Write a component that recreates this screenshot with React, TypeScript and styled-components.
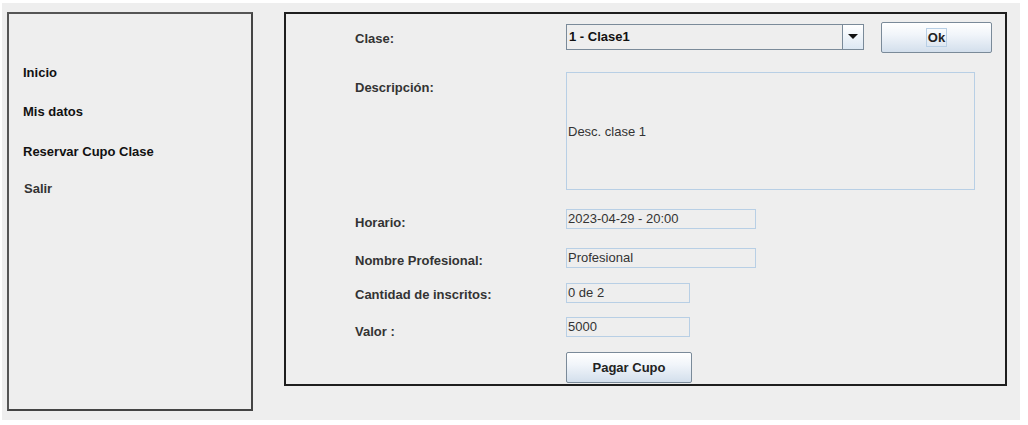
import React from "react";
import styled, { createGlobalStyle } from "styled-components";

const GlobalStyle = createGlobalStyle`
  html, body {
    margin: 0;
    padding: 0;
    background: #ffffff;
  }
  body {
    font-family: "Liberation Sans", Arial, sans-serif;
    font-size: 13px;
  }
`;

interface itemProps {
  indent?: number;
  gap?: number;
  muted?: boolean;
}
interface rowProps {
  top: number;
}
interface labelProps {
  pad: number;
}
interface fieldProps {
  w: number;
}

const Window = styled.div`
  display: flex;
  align-items: flex-start;
  gap: 31px;
  margin: 3px 0 0 2px;
  width: 1018px;
  height: 417px;
  padding: 9px 0 0 5px;
  box-sizing: border-box;
  background: #eeeeee;
`;

const SideMenu = styled.div`
  width: 246px;
  height: 399px;
  box-sizing: border-box;
  border: 2px solid #444444;
  border-top-color: #555555;
  border-left-color: #555555;
  padding: 51px 0 0 14px;
  display: flex;
  flex-direction: column;
`;

const MenuItem = styled.div<itemProps>`
  font-weight: bold;
  font-size: 13px;
  line-height: 15px;
  color: ${({ muted }) => (muted ? "#333333" : "#111111")};
  margin-left: ${({ indent }) => indent || 0}px;
  margin-top: ${({ gap }) => gap || 0}px;
  cursor: pointer;
`;

const MainPanel = styled.div`
  width: 723px;
  height: 374px;
  box-sizing: border-box;
  border: 2px solid #1e1e1e;
  padding: 8px 0 0 69px;
  display: flex;
  flex-direction: column;
`;

const Row = styled.div<rowProps>`
  display: flex;
  align-items: flex-start;
  margin-top: ${({ top }) => top}px;
`;

const Label = styled.div<labelProps>`
  width: 211px;
  flex-shrink: 0;
  padding-top: ${({ pad }) => pad}px;
  font-weight: bold;
  font-size: 13px;
  line-height: 15px;
  color: #333333;
`;

const Combo = styled.div`
  margin-top: 2px;
  width: 298px;
  height: 26px;
  box-sizing: border-box;
  border: 1px solid #7a8a99;
  background: #eeeeee;
  display: flex;
`;

const ComboValue = styled.div`
  flex: 1;
  padding-left: 2px;
  font-weight: bold;
  font-size: 13px;
  line-height: 24px;
  color: #111111;
`;

const ComboArrow = styled.div`
  width: 20px;
  border-left: 1px solid #7a8a99;
  background: linear-gradient(#ffffff, #dde8f3);
  display: flex;
  align-items: center;
  justify-content: center;
`;

const Button = styled.button<fieldProps>`
  width: ${({ w }) => w}px;
  height: 31px;
  box-sizing: border-box;
  border: 1px solid #7a8a99;
  border-radius: 2px;
  background: linear-gradient(#ffffff 0%, #f1f5fa 40%, #d3dfec 100%);
  font-family: "Liberation Sans", Arial, sans-serif;
  font-weight: bold;
  font-size: 13px;
  color: #222222;
  padding: 0;
  display: flex;
  align-items: center;
  justify-content: center;
`;

const OkButton = styled(Button)`
  margin-left: 17px;
`;

const FocusText = styled.span`
  border: 1px solid #b8cfe5;
  padding: 1px 1px;
  line-height: 15px;
`;

const TextArea = styled.div`
  width: 409px;
  height: 118px;
  box-sizing: border-box;
  border: 1px solid #b8cfe5;
  background: #eeeeee;
  display: flex;
  align-items: center;
  padding-left: 1px;
  font-size: 13px;
  color: #333333;
`;

const Field = styled.div<fieldProps>`
  width: ${({ w }) => w}px;
  height: 20px;
  box-sizing: border-box;
  border: 1px solid #b8cfe5;
  background: #eeeeee;
  padding-left: 1px;
  font-size: 13px;
  line-height: 18px;
  color: #333333;
`;

function App() {
  return (
    <>
      <GlobalStyle />
      <Window>
        <SideMenu>
          <MenuItem>Inicio</MenuItem>
          <MenuItem gap={24}>Mis datos</MenuItem>
          <MenuItem gap={25}>Reservar Cupo Clase</MenuItem>
          <MenuItem gap={22} indent={1} muted>
            Salir
          </MenuItem>
        </SideMenu>
        <MainPanel>
          <Row top={0}>
            <Label pad={9}>Clase:</Label>
            <Combo>
              <ComboValue>1 - Clase1</ComboValue>
              <ComboArrow>
                <svg width="10" height="6" viewBox="0 0 10 6">
                  <path d="M0 0 L10 0 L5 5 Z" fill="#111" />
                </svg>
              </ComboArrow>
            </Combo>
            <OkButton w={111}>
              <FocusText>Ok</FocusText>
            </OkButton>
          </Row>
          <Row top={19}>
            <Label pad={8}>Descripción:</Label>
            <TextArea>Desc. clase 1</TextArea>
          </Row>
          <Row top={19}>
            <Label pad={6}>Horario:</Label>
            <Field w={190}>2023-04-29 - 20:00</Field>
          </Row>
          <Row top={18}>
            <Label pad={5}>Nombre Profesional:</Label>
            <Field w={190}>Profesional</Field>
          </Row>
          <Row top={15}>
            <Label pad={4}>Cantidad de inscritos:</Label>
            <Field w={124}>0 de 2</Field>
          </Row>
          <Row top={14}>
            <Label pad={7}>Valor :</Label>
            <Field w={124}>5000</Field>
          </Row>
          <Row top={13}>
            <Label pad={0}></Label>
            <Button w={126}>Pagar Cupo</Button>
          </Row>
        </MainPanel>
      </Window>
    </>
  );
}

export default App;
